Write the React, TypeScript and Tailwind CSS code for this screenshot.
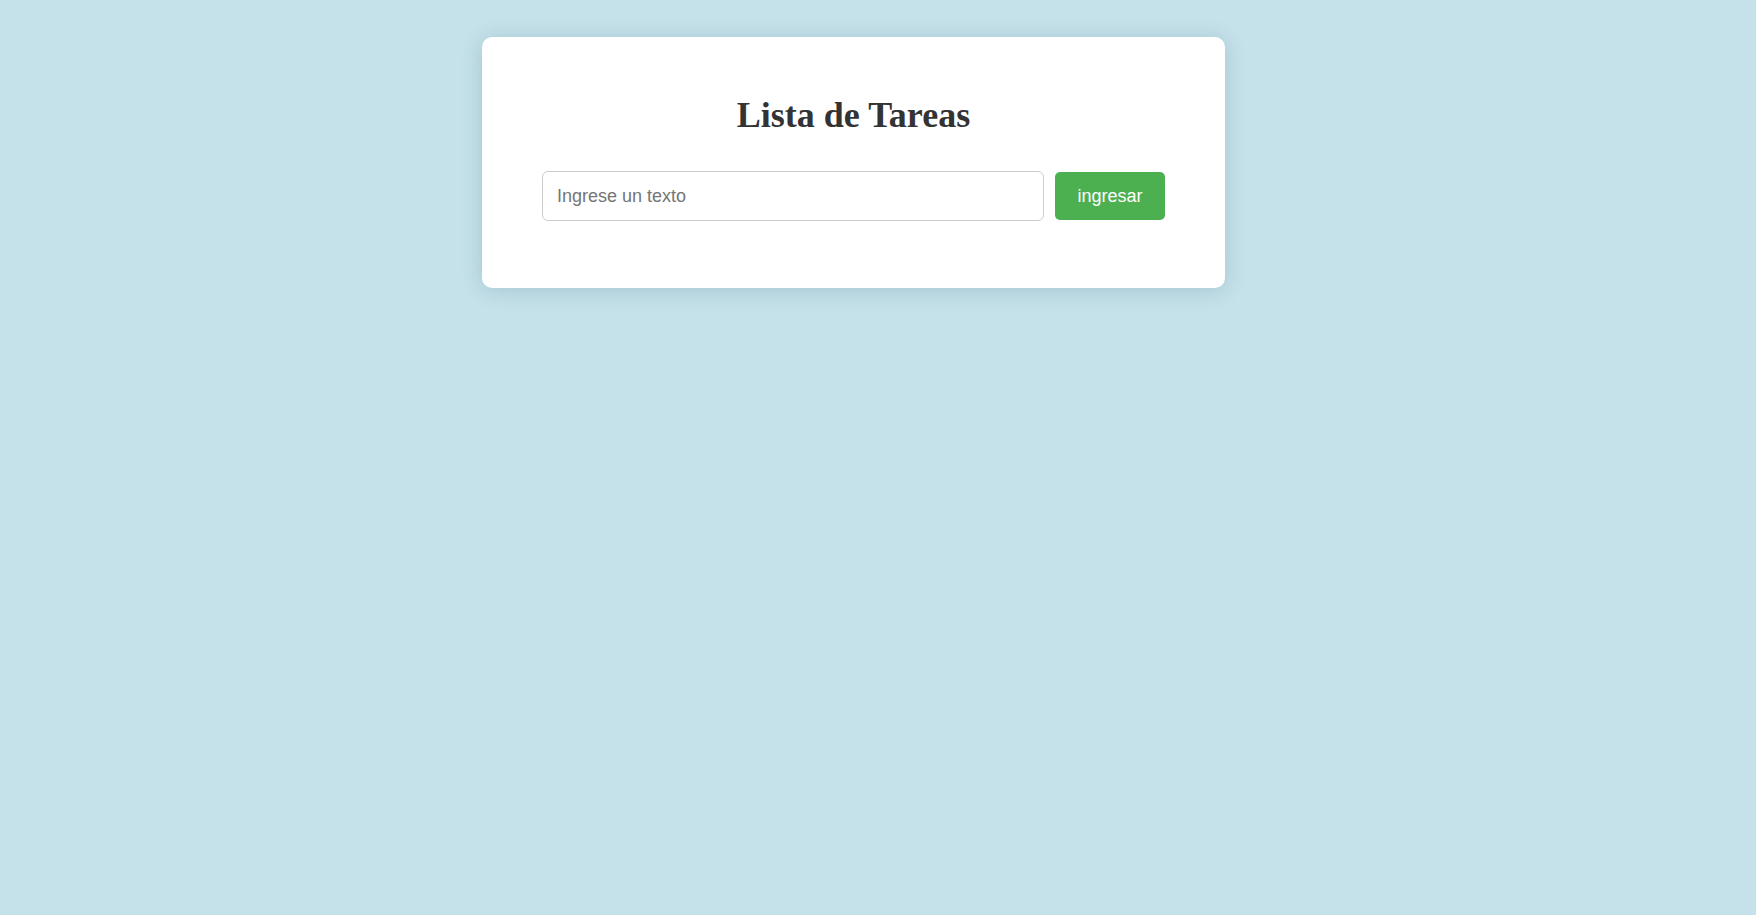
import React from "react";

export default function App() {
  return (
    <div className="min-h-[915px] w-full bg-[#c5e2eb] pt-[37px]" style={{ fontFamily: '"Liberation Sans", Arial, sans-serif' }}>
      <div className="ml-[482px] w-[743px] rounded-[10px] bg-white px-[60px] pt-[59px] pb-[67px] shadow-[0_2px_22px_rgba(0,50,70,0.16)]">
        <h1
          className="text-center text-[36px] font-bold leading-[39px] text-[#333333]"
          style={{ fontFamily: '"Liberation Serif", "Times New Roman", serif' }}
        >
          Lista de Tareas
        </h1>
        <div className="mt-[36px] flex items-center gap-[11px]">
          <input
            type="text"
            placeholder="Ingrese un texto"
            className="h-[50px] w-[502px] rounded-[6px] border border-[#cccccc] bg-white px-[14px] text-[18px] text-[#333] outline-none placeholder:text-[#757575]"
          />
          <button className="h-[48px] w-[110px] rounded-[5px] bg-[#4caf50] text-[18px] text-white">
            ingresar
          </button>
        </div>
      </div>
    </div>
  );
}
